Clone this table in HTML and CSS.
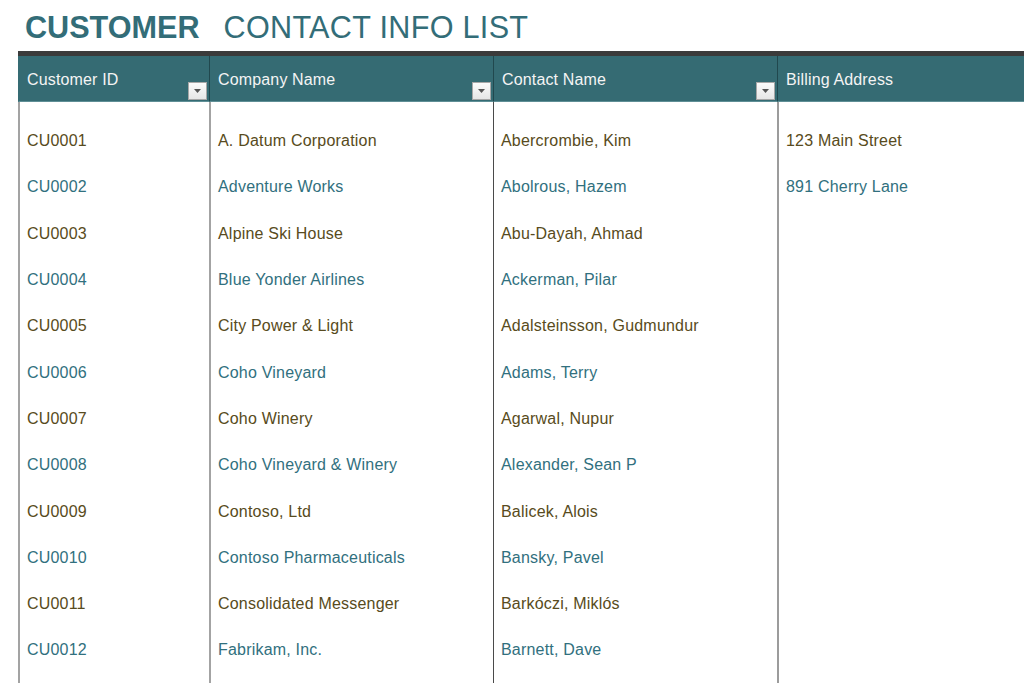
FILE: index.html
```html
<!DOCTYPE html>
<html>
<head>
<meta charset="utf-8">
<link rel="stylesheet" href="styles.css">
</head>
<body>
<h1 class="title"><span class="title-strong">CUSTOMER</span><span class="title-light">CONTACT INFO LIST</span></h1>
<div class="sheet">
  <div class="col col-id">
    <div class="hcell">Customer ID<span class="dd"><svg viewBox="0 0 7 4" width="7" height="4"><path d="M0 0H7L3.5 4Z" fill="#555"/></svg></span></div>
    <div class="cells">
      <div class="cell odd">CU0001</div>
      <div class="cell even">CU0002</div>
      <div class="cell odd">CU0003</div>
      <div class="cell even">CU0004</div>
      <div class="cell odd">CU0005</div>
      <div class="cell even">CU0006</div>
      <div class="cell odd">CU0007</div>
      <div class="cell even">CU0008</div>
      <div class="cell odd">CU0009</div>
      <div class="cell even">CU0010</div>
      <div class="cell odd">CU0011</div>
      <div class="cell even">CU0012</div>
    </div>
  </div>
  <div class="col col-company">
    <div class="hcell">Company Name<span class="dd"><svg viewBox="0 0 7 4" width="7" height="4"><path d="M0 0H7L3.5 4Z" fill="#555"/></svg></span></div>
    <div class="cells">
      <div class="cell odd">A. Datum Corporation</div>
      <div class="cell even">Adventure Works</div>
      <div class="cell odd">Alpine Ski House</div>
      <div class="cell even">Blue Yonder Airlines</div>
      <div class="cell odd">City Power &amp; Light</div>
      <div class="cell even">Coho Vineyard</div>
      <div class="cell odd">Coho Winery</div>
      <div class="cell even">Coho Vineyard &amp; Winery</div>
      <div class="cell odd">Contoso, Ltd</div>
      <div class="cell even">Contoso Pharmaceuticals</div>
      <div class="cell odd">Consolidated Messenger</div>
      <div class="cell even">Fabrikam, Inc.</div>
    </div>
  </div>
  <div class="col col-contact">
    <div class="hcell">Contact Name<span class="dd"><svg viewBox="0 0 7 4" width="7" height="4"><path d="M0 0H7L3.5 4Z" fill="#555"/></svg></span></div>
    <div class="cells">
      <div class="cell odd">Abercrombie, Kim</div>
      <div class="cell even">Abolrous, Hazem</div>
      <div class="cell odd">Abu-Dayah, Ahmad</div>
      <div class="cell even">Ackerman, Pilar</div>
      <div class="cell odd">Adalsteinsson, Gudmundur</div>
      <div class="cell even">Adams, Terry</div>
      <div class="cell odd">Agarwal, Nupur</div>
      <div class="cell even">Alexander, Sean P</div>
      <div class="cell odd">Balicek, Alois</div>
      <div class="cell even">Bansky, Pavel</div>
      <div class="cell odd">Barkóczi, Miklós</div>
      <div class="cell even">Barnett, Dave</div>
    </div>
  </div>
  <div class="col col-address">
    <div class="hcell">Billing Address</div>
    <div class="cells">
      <div class="cell odd">123 Main Street</div>
      <div class="cell even">891 Cherry Lane</div>
    </div>
  </div>
</div>
</body>
</html>
```

FILE: styles.css
```css
html, body {
  margin: 0;
  padding: 0;
  background: #ffffff;
  overflow: hidden;
  height: 683px;
}
body {
  font-family: "Liberation Sans", Arial, sans-serif;
  display: flex;
  flex-direction: column;
}
.title {
  margin: 9px 0 6px 25px;
  font-size: 30.6px;
  line-height: 36px;
  font-weight: normal;
  color: #336d78;
  display: flex;
  gap: 24px;
  white-space: nowrap;
}
.title-strong {
  font-weight: bold;
}
.title-light {
  letter-spacing: 0.3px;
}
.sheet {
  margin-left: 18px;
  border-top: 5px solid #3b3b3b;
  display: flex;
  flex: 1;
  min-height: 0;
}
.col {
  display: flex;
  flex-direction: column;
  flex: none;
}
.col-id { width: 191px; }
.col-company { width: 284px; }
.col-contact { width: 284px; }
.col-address { flex: 1; }
.hcell {
  position: relative;
  box-sizing: border-box;
  height: 46px;
  padding-top: 2px;
  background: #356b73;
  border-bottom: 1px solid #5f8f96;
  border-left: 1px solid #21484e;
  color: #f4f4f4;
  font-size: 16px;
  letter-spacing: 0.15px;
  display: flex;
  align-items: center;
  padding-left: 8px;
}
.col-id .hcell { border-left-color: #356b73; padding-left: 8px; }
.dd {
  position: absolute;
  right: 2px;
  bottom: 1px;
  width: 17px;
  height: 16px;
  background: linear-gradient(#fbfbfb, #e6e6e6);
  border: 1px solid #a7a7a7;
  display: flex;
  align-items: center;
  justify-content: center;
}
.cells {
  flex: 1;
  padding-top: 16px;
  border-left: 2px solid #a3a3a3;
}
.col-contact .cells { border-left: 1px solid #4a4a4a; }
.col-address .cells { border-left: 2px solid #9c9c9c; }
.cell {
  height: 46.3px;
  display: flex;
  align-items: center;
  font-size: 16px;
  letter-spacing: 0.2px;
  white-space: nowrap;
  padding-left: 7px;
}
.odd { color: #584b20; }
.even { color: #31707e; }
```
